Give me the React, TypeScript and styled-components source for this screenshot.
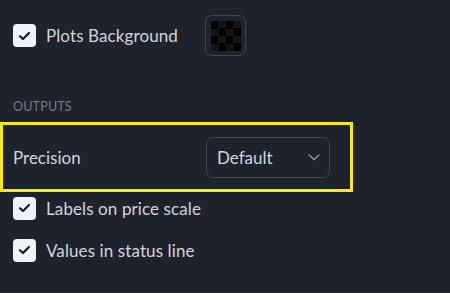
import React from "react";
import styled, { createGlobalStyle } from "styled-components";

const Global = createGlobalStyle`
  html, body { margin: 0; padding: 0; background: #1e222d; }
  body { font-family: "Lato", "Open Sans", sans-serif; }
`;

const Page = styled.div`
  width: 450px;
  height: 293px;
  box-sizing: border-box;
  background: #1e222d;
  border-bottom: 1px solid #2a2e39;
  display: flex;
  flex-direction: column;
  overflow: hidden;
`;

const Row = styled.div<{ $top?: number; $height?: number }>`
  display: flex;
  align-items: center;
  height: ${(p) => p.$height ?? 32}px;
  margin-top: ${(p) => p.$top ?? 0}px;
  padding-left: 13px;
`;

const CheckCell = styled.div`
  width: 192px;
  display: flex;
  align-items: center;
  gap: 10px;
`;

const Box = styled.span`
  width: 23px;
  height: 23px;
  border-radius: 4px;
  background: #f0f3fa;
  display: inline-flex;
  align-items: center;
  justify-content: center;
  flex: none;
`;

const Label = styled.span`
  color: #d1d4dc;
  font-size: 17px;
  letter-spacing: 0.1px;
  white-space: nowrap;
`;

const Swatch = styled.div`
  width: 41px;
  height: 41px;
  box-sizing: border-box;
  border: 1px solid #434651;
  border-radius: 7px;
  display: flex;
  align-items: center;
  justify-content: center;
`;

const Checker = styled.div`
  width: 30px;
  height: 30px;
  border-radius: 2px;
  background-color: #000;
  background-image: conic-gradient(#141414 25%, #000 0 50%, #141414 0 75%, #000 0);
  background-size: 15px 15px;
`;

const SectionTitle = styled.div`
  margin-top: 43px;
  padding-left: 13px;
  height: 16px;
  line-height: 16px;
  color: #787b86;
  font-size: 12.5px;
  letter-spacing: 0.2px;
`;

const Highlight = styled.div`
  margin-top: 7px;
  width: 353px;
  height: 70px;
  box-sizing: border-box;
  border: 3px solid #f8ea1c;
  display: flex;
  align-items: center;
  padding-left: 10px;
`;

const FieldLabel = styled.span`
  width: 193px;
  color: #d1d4dc;
  font-size: 17px;
`;

const Select = styled.div`
  width: 124px;
  height: 41px;
  box-sizing: border-box;
  border: 1px solid #434651;
  border-radius: 7px;
  display: flex;
  align-items: center;
  justify-content: space-between;
  padding: 0 9px 0 10px;
  color: #d1d4dc;
  font-size: 17px;
`;

const Check = () => (
  <Box>
    <svg width="13" height="10" viewBox="0 0 13 10" fill="none">
      <path d="M2 5.3 L5 8 L11 2" stroke="#131722" strokeWidth="2.2" strokeLinecap="round" strokeLinejoin="round" />
    </svg>
  </Box>
);

const Chevron = () => (
  <svg width="12" height="7" viewBox="0 0 12 7" fill="none">
    <path d="M1 1 L6 5.5 L11 1" stroke="#9598a1" strokeWidth="1.4" strokeLinecap="round" strokeLinejoin="round" />
  </svg>
);

export default function App() {
  return (
    <>
      <Global />
      <Page>
        <Row $top={15} $height={41}>
          <CheckCell>
            <Check />
            <Label>Plots Background</Label>
          </CheckCell>
          <Swatch>
            <Checker />
          </Swatch>
        </Row>
        <SectionTitle>OUTPUTS</SectionTitle>
        <Highlight>
          <FieldLabel>Precision</FieldLabel>
          <Select>
            <span>Default</span>
            <Chevron />
          </Select>
        </Highlight>
        <Row $top={0} $height={32}>
          <CheckCell>
            <Check />
            <Label>Labels on price scale</Label>
          </CheckCell>
        </Row>
        <Row $top={10} $height={32}>
          <CheckCell>
            <Check />
            <Label>Values in status line</Label>
          </CheckCell>
        </Row>
      </Page>
    </>
  );
}
